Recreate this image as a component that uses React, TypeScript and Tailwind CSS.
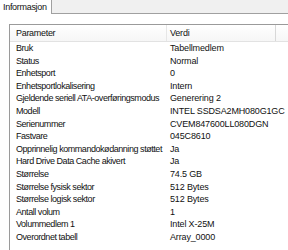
const rows: [string, string][] = [
  ["Bruk", "Tabellmedlem"],
  ["Status", "Normal"],
  ["Enhetsport", "0"],
  ["Enhetsportlokalisering", "Intern"],
  ["Gjeldende seriell ATA-overføringsmodus", "Generering 2"],
  ["Modell", "INTEL SSDSA2MH080G1GC"],
  ["Serienummer", "CVEM847600LL080DGN"],
  ["Fastvare", "045C8610"],
  ["Opprinnelig kommandokødanning støttet", "Ja"],
  ["Hard Drive Data Cache akivert", "Ja"],
  ["Størrelse", "74.5 GB"],
  ["Størrelse fysisk sektor", "512 Bytes"],
  ["Størrelse logisk sektor", "512 Bytes"],
  ["Antall volum", "1"],
  ["Volummedlem 1", "Intel X-25M"],
  ["Overordnet tabell", "Array_0000"],
];

export default function App() {
  return (
    <div className="w-[288px] h-[250px] overflow-hidden bg-white text-[9px] text-[#111] font-['Liberation_Sans',sans-serif] flex flex-col">
      <div className="flex h-[14px] shrink-0 bg-[#f0f0f0] border-b border-[#a0a0a0]">
        <div className="h-[14px] pl-[3px] pr-[4px] pt-[2px] bg-white border-r border-[#a0a0a0] leading-[10px] tracking-[-0.3px]">
          Informasjon
        </div>
      </div>
      <div className="flex-1 pl-[9px] pt-[10px] bg-white">
        <div className="h-full border-l border-t border-[#9a9a9a] bg-white">
          <div className="flex h-[17px] border-b border-[#e2e2e2] bg-gradient-to-b from-white to-[#f6f6f6] leading-[16px]">
            <div className="w-[157px] shrink-0 pl-[6px] border-r border-[#e6e6e6] tracking-[-0.3px]">Parameter</div>
            <div className="w-[109px] shrink-0 pl-[3px] border-r border-[#d8d8d8] tracking-[-0.2px]">Verdi</div>
          </div>
          {rows.map(([k, v]) => (
            <div key={k} className="flex h-[12.6px] leading-[12.6px]">
              <div className="w-[157px] shrink-0 pl-[6px] whitespace-nowrap overflow-hidden tracking-[-0.45px]">{k}</div>
              <div className="pl-[3px] whitespace-nowrap tracking-[-0.15px]">{v}</div>
            </div>
          ))}
        </div>
      </div>
    </div>
  );
}
